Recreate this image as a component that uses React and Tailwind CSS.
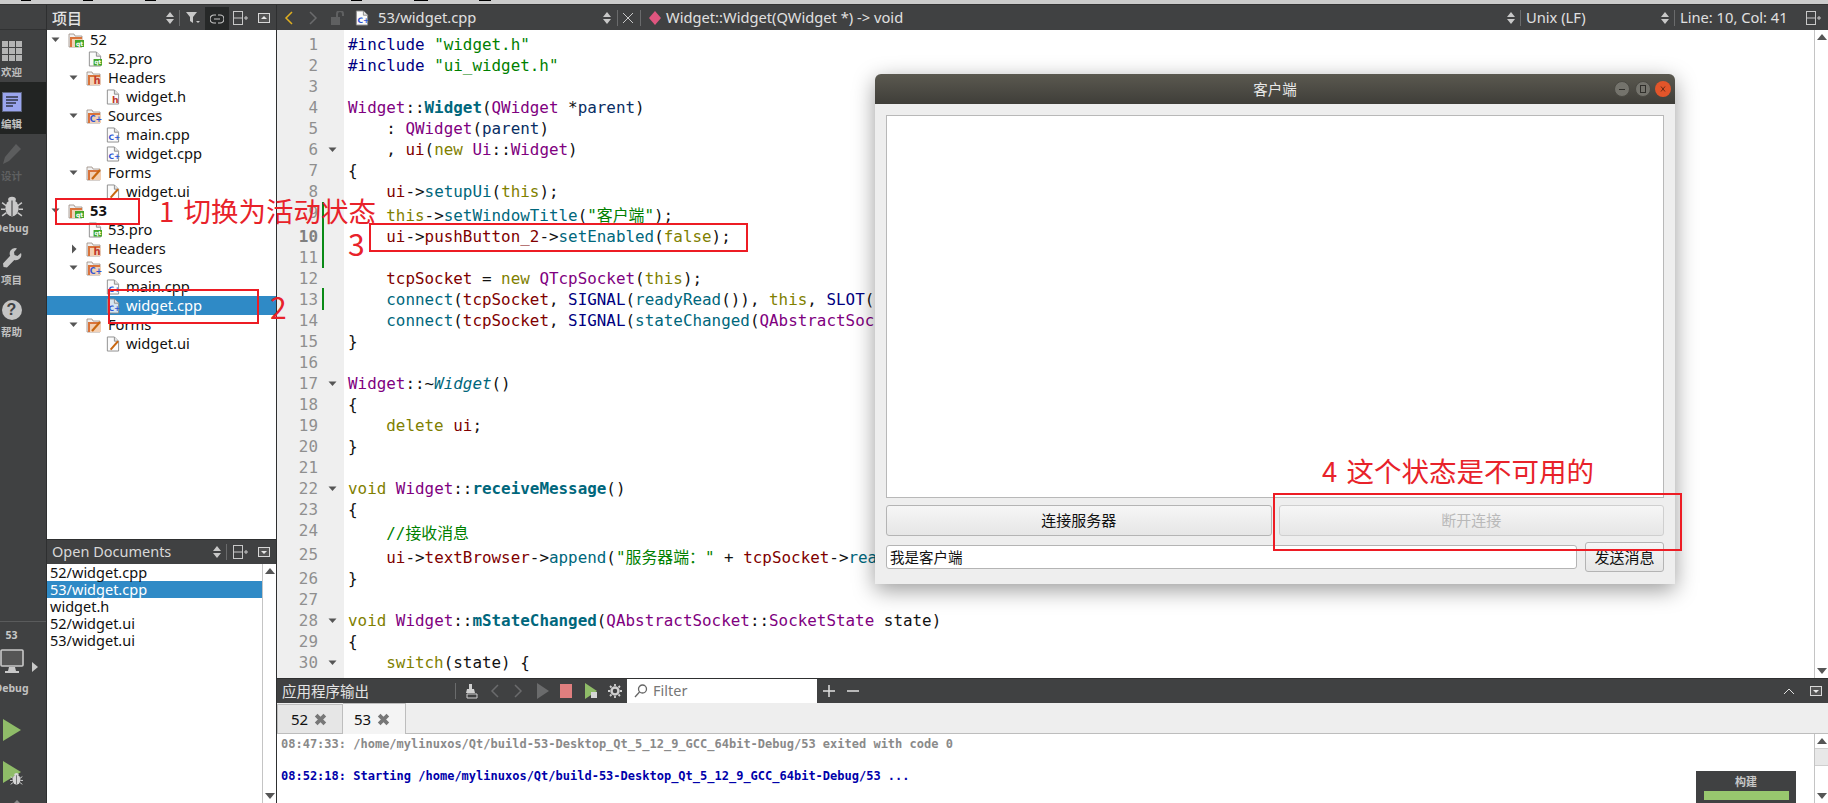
import React from 'react';

const ui = { fontFamily: '"Noto Sans", "Noto Sans CJK SC", sans-serif' };
const cjk = { fontFamily: '"Noto Sans CJK SC", sans-serif' };
const mono = { fontFamily: '"DejaVu Sans Mono", "Noto Sans CJK SC", monospace' };

/* ── small icons ─────────────────────────────────────────── */
const UpDown = ({ className = 'fill-[#c8c8c8]' }) => (
  <svg width="12" height="14" viewBox="0 0 12 14" className={className}>
    <path d="M6 1 10 6H2zM6 13 2 8h8z" />
  </svg>
);

const Sep = () => <div className="w-px h-[16px] bg-[#6a6b6c]" />;

const SplitPlus = () => (
  <svg width="16" height="16" viewBox="0 0 16 16" fill="none" stroke="#c8c8c8" strokeWidth="1">
    <rect x="0.5" y="1.5" width="9" height="13" />
    <path d="M0.5 8h9M11 8h4M13 6v4" />
  </svg>
);

const CloseBox = ({ up }) => (
  <svg width="12" height="10" viewBox="0 0 12 10">
    <rect x="0.5" y="0.5" width="11" height="9" fill="#555" stroke="#d8d8d8" />
    <path d={up ? 'M3 6h6L6 3z' : 'M3 4h6L6 7z'} fill="#e8e8e8" />
  </svg>
);

const Badge = ({ kind }) => {
  if (kind === 'qt') return (
    <g>
      <rect x="7" y="8" width="9" height="7" fill="#41a62a" />
      <text x="11.5" y="13.6" textAnchor="middle" fontSize="6" fontWeight="700" fill="#fff" fontFamily="DejaVu Sans">qt</text>
    </g>
  );
  if (kind === 'h') return <text x="11" y="14" textAnchor="middle" fontSize="10" fontWeight="700" fill="#c0392b" fontFamily="DejaVu Sans">h</text>;
  if (kind === 'cpp') return <text x="10" y="13.5" textAnchor="middle" fontSize="8" fontWeight="700" fill="#2f55d4" fontFamily="DejaVu Sans">C+</text>;
  return <path d="M6 14 14 5" stroke="#c8660f" strokeWidth="2.2" />;
};

const FolderIcon = ({ kind }) => (
  <svg width="16" height="16" viewBox="0 0 16 16" className="shrink-0">
    <path d="M1 2h5l1 2h7v11H1z" fill="#f0f0f0" stroke="#9a8b80" strokeWidth="0.8" />
    <path d="M2 5h12v10H2z" fill="#d9743c" />
    <path d="M4 7h11v8H4z" fill="#f2d0b5" />
    <Badge kind={kind} />
  </svg>
);

const FileIcon = ({ kind, selected }) => (
  <svg width="15" height="16" viewBox="0 0 16 16" className="shrink-0">
    <path d="M2.5 0.5H10L14.5 5V15.5H2.5z" fill={selected ? '#d5e4f0' : '#fbfbfb'} stroke="#8c8c8c" />
    <path d="M10 .5V5h4.5" fill="#e4e4e4" stroke="#8c8c8c" />
    <Badge kind={kind} />
  </svg>
);

const Arrow = ({ open }) => (
  <svg width="12" height="12" viewBox="0 0 12 12" className="fill-[#555]">
    {open ? <path d="M1.5 3.5h8L5.5 8z" /> : <path d="M4 1.5 8.5 6 4 10.5z" />}
  </svg>
);

/* ── left mode bar ───────────────────────────────────────── */
const GridIcon = () => (
  <div className="grid grid-cols-3 gap-[1px] w-[20px] h-[20px] mt-[2px]">
    {[0, 1, 2, 3, 4, 5, 6, 7, 8].map((i) => <div key={i} className="bg-[#b4b4b4]" />)}
  </div>
);

const EditIcon = () => (
  <svg width="20" height="20" viewBox="0 0 20 20">
    <rect x="0.5" y="0.5" width="19" height="19" fill="#9aa5ee" stroke="#5c6480" />
    <path d="M4 5h12M4 8h12M4 11h10M4 14h7" stroke="#4a5070" strokeWidth="2" />
  </svg>
);

const PencilIcon = () => (
  <svg width="20" height="22" viewBox="0 0 20 22" fill="#5c5d5e">
    <path d="M14 1l5 5L7 18l-6 3 2-7z" />
  </svg>
);

const BugIcon = ({ size = 20, fill = '#c9c9c9' }) => (
  <svg width={size} height={size} viewBox="0 0 20 20" fill={fill}>
    <ellipse cx="10" cy="12" rx="6" ry="7.5" />
    <ellipse cx="10" cy="4" rx="3.5" ry="2.5" />
    <path d="M1 7l4 3M19 7l-4 3M0 13h4M20 13h-4M1 19l4-3M19 19l-4-3" stroke={fill} strokeWidth="1.4" />
    <path d="M10 5v14" stroke="#404142" />
  </svg>
);

const WrenchIcon = () => (
  <svg width="20" height="22" viewBox="0 0 20 22" fill="#c4c4c4">
    <path d="M13 1a5.5 5.5 0 0 0-4.8 7.8L1 16.5 1.5 20l3.5.5 7.3-7.4A5.5 5.5 0 0 0 19 6l-3.5 3-3-1-.5-3 3-3.5A5 5 0 0 0 13 1z" />
  </svg>
);

const HelpIcon = () => (
  <div className="w-[20px] h-[20px] rounded-full bg-[#c4c4c4] flex items-center justify-center text-[#404142] text-[16px] font-bold leading-none" style={{ fontFamily: '"Liberation Sans", sans-serif' }}>?</div>
);

const modes = [
  { label: '欢迎', icon: <GridIcon /> },
  { label: '编辑', icon: <EditIcon />, active: true },
  { label: '设计', icon: <PencilIcon />, dim: true },
  { label: 'Debug', icon: <BugIcon size={22} /> },
  { label: '项目', icon: <WrenchIcon /> },
  { label: '帮助', icon: <HelpIcon /> },
];

const ModeBar = () => (
  <div className="w-[47px] shrink-0 bg-[#404142] border-r border-[#2e2f30] overflow-hidden flex flex-col">
    <div className="h-[25px] shrink-0 border-b border-[#303132]" />
    {modes.map((m) => (
      <div key={m.label} className={`h-[52px] shrink-0 ${m.active ? 'bg-[#222423]' : ''}`}>
        <div className="w-[47px] -ml-[12px] flex flex-col items-center pt-[8px]">
          <div className="h-[24px] flex items-center justify-center">{m.icon}</div>
          <div className={`h-[16px] mt-[2px] text-[10.5px] leading-[16px] font-bold ${m.dim ? 'text-[#5f6061]' : 'text-[#c0c0c0]'}`} style={ui}>{m.label}</div>
        </div>
      </div>
    ))}
    <div className="mt-auto h-[182px] shrink-0 border-t border-[#5a5b5c] relative">
      <div className="w-[47px] -ml-[12px] flex flex-col items-center">
        <div className="mt-[5px] h-[16px] text-[10.5px] leading-[16px] font-bold text-[#c8c8c8]" style={ui}>53</div>
        <svg width="24" height="25" viewBox="0 0 24 25" className="mt-[6px]">
          <rect x="1" y="1" width="22" height="16" rx="1" fill="#555" stroke="#c8c8c8" strokeWidth="1.6" />
          <path d="M9 18h6l1 4h3v2H5v-2h3z" fill="#c8c8c8" />
        </svg>
        <div className="h-[16px] mt-[6px] text-[10.5px] leading-[16px] font-bold text-[#c0c0c0]" style={ui}>Debug</div>
        <svg width="18" height="22" viewBox="0 0 18 22" className="mt-[23px]"><path d="M0 0 18 11 0 22z" fill="#8fbc68" /></svg>
        <div className="relative mt-[20px] w-[18px] h-[22px]">
          <svg width="18" height="22" viewBox="0 0 18 22"><path d="M0 0 18 11 0 22z" fill="#8fbc68" /></svg>
          <div className="absolute left-[7px] top-[11px]"><BugIcon size={13} fill="#d6d6d6" /></div>
        </div>
        <svg width="16" height="16" viewBox="0 0 16 16" className="mt-[15px] ml-[8px]">
          <path d="M2 16 7 8l2 2-3 6z" fill="#d2730f" />
          <path d="M5 6 9 2l6 6-3 3z" fill="#8a8a8a" />
        </svg>
      </div>
      <svg width="6" height="10" viewBox="0 0 6 10" className="absolute left-[32px] top-[40px] fill-[#c8c8c8]"><path d="M0 0 6 5 0 10z" /></svg>
    </div>
  </div>
);

/* ── project tree ────────────────────────────────────────── */
const tree = [
  { level: 0, text: '52', open: true, folder: 'qt' },
  { level: 1, text: '52.pro', file: 'qt' },
  { level: 1, text: 'Headers', open: true, folder: 'h' },
  { level: 2, text: 'widget.h', file: 'h' },
  { level: 1, text: 'Sources', open: true, folder: 'cpp' },
  { level: 2, text: 'main.cpp', file: 'cpp' },
  { level: 2, text: 'widget.cpp', file: 'cpp' },
  { level: 1, text: 'Forms', open: true, folder: 'ui' },
  { level: 2, text: 'widget.ui', file: 'ui' },
  { level: 0, text: '53', open: true, folder: 'qt', bold: true },
  { level: 1, text: '53.pro', file: 'qt' },
  { level: 1, text: 'Headers', open: false, folder: 'h' },
  { level: 1, text: 'Sources', open: true, folder: 'cpp' },
  { level: 2, text: 'main.cpp', file: 'cpp' },
  { level: 2, text: 'widget.cpp', file: 'cpp', selected: true },
  { level: 1, text: 'Forms', open: true, folder: 'ui' },
  { level: 2, text: 'widget.ui', file: 'ui' },
];
const levelPad = ['pl-[3px]', 'pl-[21px]', 'pl-[39px]'];

const TreeRow = ({ row }) => (
  <div className={`h-[19px] flex items-center ${levelPad[row.level]} ${row.selected ? 'bg-[#2f8ac6] text-white' : 'text-[#111]'}`}>
    <div className="w-[12px] mr-[6px] shrink-0 flex justify-center">
      {row.folder && <Arrow open={row.open} />}
    </div>
    <div className="w-[16px] mr-[6px] shrink-0 flex justify-center">
      {row.folder ? <FolderIcon kind={row.folder} /> : <FileIcon kind={row.file} selected={row.selected} />}
    </div>
    <span className={`text-[14.7px] leading-[19px] ${row.bold ? 'font-bold' : ''}`}>{row.text}</span>
  </div>
);

const docs = ['52/widget.cpp', '53/widget.cpp', 'widget.h', '52/widget.ui', '53/widget.ui'];

const ScrollBar = ({ thumb }) => (
  <div className="w-[14px] shrink-0 bg-white border-l border-[#c4c4c4] flex flex-col items-center justify-between py-[4px]">
    <div className="w-full flex flex-col items-center">
      <svg width="10" height="6" viewBox="0 0 10 6" className="fill-[#555]"><path d="M5 0 10 6H0z" /></svg>
      {thumb && <div className="w-full h-[18px] mt-[4px] bg-[#e8e8e8] border-y border-[#cfcfcf]" />}
    </div>
    <svg width="10" height="6" viewBox="0 0 10 6" className="fill-[#555]"><path d="M5 6 0 0h10z" /></svg>
  </div>
);

const SidePanel = () => (
  <div className="w-[230px] shrink-0 flex flex-col border-r border-[#2e2f30]" style={ui}>
    <div className="h-[25px] shrink-0 bg-[#404142] flex items-center pl-[5px]">
      <span className="text-[#e4e4e4] text-[15px] leading-none font-medium w-[112px]" style={cjk}>项目</span>
      <UpDown />
      <div className="ml-[3px]"><Sep /></div>
      <svg width="14" height="12" viewBox="0 0 14 12" className="ml-[6px] fill-[#c8c8c8]"><path d="M0 0h11L7 5v6L4 9V5z" /><path d="M10 9h4l-2 2z" /></svg>
      <div className="ml-[5px] w-[24px] h-[23px] mt-[2px] bg-[#262828] flex items-center justify-center">
        <svg width="14" height="10" viewBox="0 0 14 10" fill="none" stroke="#c8c8c8" strokeWidth="1.2"><path d="M6 1H4a4 4 0 0 0 0 8h2M8 1h2a4 4 0 0 1 0 8H8M4 5h6" /></svg>
      </div>
      <div className="ml-[4px]"><SplitPlus /></div>
      <div className="ml-[9px]"><CloseBox up /></div>
    </div>
    <div className="flex-1 bg-white">
      {tree.map((row, i) => <TreeRow key={i} row={row} />)}
    </div>
    <div className="h-[264px] shrink-0 flex flex-col">
      <div className="h-[25px] shrink-0 bg-[#404142] border-t border-[#2e2f30] flex items-center pl-[5px]">
        <span className="text-[#d8d8d8] text-[14.5px] w-[159px]">Open Documents</span>
        <UpDown />
        <div className="ml-[3px]"><Sep /></div>
        <div className="ml-[6px]"><SplitPlus /></div>
        <div className="ml-[9px]"><CloseBox /></div>
      </div>
      <div className="flex-1 flex bg-white">
        <div className="flex-1">
          {docs.map((d, i) => (
            <div key={d} className={`h-[17px] pl-[3px] text-[14.5px] leading-[17px] ${i === 1 ? 'bg-[#2f8ac6] text-white' : 'text-[#111]'}`}>{d}</div>
          ))}
        </div>
        <ScrollBar />
      </div>
    </div>
  </div>
);

/* ── editor toolbar ──────────────────────────────────────── */
const Chevron = ({ left, color = '#6a6b6c' }) => (
  <svg width="12" height="14" viewBox="0 0 12 14" fill="none" stroke={color} strokeWidth="1.5">
    <path d={left ? 'M9 1 3 7l6 6' : 'M3 1l6 6-6 6'} />
  </svg>
);

const EditorBar = () => (
  <div className="h-[25px] shrink-0 bg-[#404142] flex items-center pl-[6px] text-[#e0e0e0] text-[14.7px]" style={ui}>
    <Chevron left color="#e0b020" />
    <div className="ml-[12px]"><Chevron /></div>
    <svg width="14" height="14" viewBox="0 0 14 14" className="ml-[12px] fill-[#5f6061]"><rect x="0" y="6" width="9" height="8" /><path d="M6 6V3a3 3 0 0 1 6 0v2" fill="none" stroke="#5f6061" strokeWidth="2" /></svg>
    <div className="ml-[9px]"><FileIcon kind="cpp" /></div>
    <span className="ml-[9px] w-[223px]">53/widget.cpp</span>
    <UpDown />
    <div className="ml-[4px]"><Sep /></div>
    <svg width="12" height="12" viewBox="0 0 12 12" className="ml-[4px]" stroke="#c8c8c8" strokeWidth="1"><path d="M1 1l10 10M11 1 1 11" /></svg>
    <div className="ml-[6px]"><Sep /></div>
    <svg width="12" height="14" viewBox="0 0 12 14" className="ml-[8px] fill-[#e0567f]"><path d="M6 0 12 7 6 14 0 7z" /></svg>
    <span className="ml-[5px] w-[839px]">Widget::Widget(QWidget *) -&gt; void</span>
    <UpDown />
    <div className="ml-[3px]"><Sep /></div>
    <span className="ml-[5px] w-[133px]">Unix (LF)</span>
    <UpDown />
    <div className="ml-[3px]"><Sep /></div>
    <span className="ml-[5px] w-[126px]">Line: 10, Col: 41</span>
    <SplitPlus />
  </div>
);

/* ── code ────────────────────────────────────────────────── */
const K = ({ children }) => <span className="text-[#808000]">{children}</span>;
const T = ({ children }) => <span className="text-[#800080]">{children}</span>;
const F = ({ children }) => <span className="text-[#00677c]">{children}</span>;
const B = ({ children }) => <span className="text-[#00677c] font-bold">{children}</span>;
const S = ({ children }) => <span className="text-[#008000]">{children}</span>;
const M = ({ children }) => <span className="text-[#800000]">{children}</span>;
const N = ({ children }) => <span className="text-[#000080]">{children}</span>;
const P = ({ children }) => <span className="text-[#092e64]">{children}</span>;

const lines = [
  { c: <><N>#include</N> <S>"widget.h"</S></> },
  { c: <><N>#include</N> <S>"ui_widget.h"</S></> },
  { c: '' },
  { c: <><T>Widget</T>::<B>Widget</B>(<T>QWidget</T> *<P>parent</P>)</> },
  { c: <>{'    '}: <T>QWidget</T>(<P>parent</P>)</> },
  { c: <>{'    '}, <M>ui</M>(<K>new</K> <T>Ui</T>::<T>Widget</T>)</>, fold: true },
  { c: '{' },
  { c: <>{'    '}<M>ui</M>-&gt;<F>setupUi</F>(<K>this</K>);</> },
  { c: <>{'    '}<K>this</K>-&gt;<F>setWindowTitle</F>(<S>"客户端"</S>);</>, tall: true },
  { c: <>{'    '}<M>ui</M>-&gt;<M>pushButton_2</M>-&gt;<F>setEnabled</F>(<K>false</K>);</>, cur: true },
  { c: '' },
  { c: <>{'    '}<M>tcpSocket</M> = <K>new</K> <T>QTcpSocket</T>(<K>this</K>);</> },
  { c: <>{'    '}<F>connect</F>(<M>tcpSocket</M>, <N>SIGNAL</N>(<F>readyRead</F>()), <K>this</K>, <N>SLOT</N>(<F>receiveMessage</F>()));</> },
  { c: <>{'    '}<F>connect</F>(<M>tcpSocket</M>, <N>SIGNAL</N>(<F>stateChanged</F>(<T>QAbstractSocket</T>::<T>SocketState</T>)));</> },
  { c: '}' },
  { c: '' },
  { c: <><T>Widget</T>::~<span className="text-[#00677c] italic">Widget</span>()</>, fold: true },
  { c: '{' },
  { c: <>{'    '}<K>delete</K> <M>ui</M>;</> },
  { c: '}' },
  { c: '' },
  { c: <><K>void</K> <T>Widget</T>::<B>receiveMessage</B>()</>, fold: true },
  { c: '{' },
  { c: <>{'    '}<S>//接收消息</S></>, tall: true },
  { c: <>{'    '}<M>ui</M>-&gt;<M>textBrowser</M>-&gt;<F>append</F>(<S>"服务器端："</S> + <M>tcpSocket</M>-&gt;<F>readAll</F>());</>, tall: true },
  { c: '}' },
  { c: '' },
  { c: <><K>void</K> <T>Widget</T>::<B>mStateChanged</B>(<T>QAbstractSocket</T>::<T>SocketState</T> state)</>, fold: true },
  { c: '{' },
  { c: <>{'    '}<K>switch</K>(state) {'{'}</>, fold: true },
];

const Editor = () => (
  <div className="flex-1 min-h-0 flex overflow-hidden bg-white">
    <div className="w-[67px] shrink-0 bg-[#efefef] pt-[4px] relative text-[#8f8f8f]" style={mono}>
      {lines.map((l, i) => (
        <div key={i} className={`flex ${l.tall ? 'h-[24px]' : 'h-[21px]'}`}>
          <div className={`w-[41px] text-right text-[15.9px] leading-[21px] ${l.cur ? 'font-bold text-[#808080]' : ''}`}>{i + 1}</div>
          <div className="w-[26px] h-[21px] flex items-center justify-end pr-[5px]">
            {l.fold && <Arrow open />}
          </div>
        </div>
      ))}
      <div className="absolute left-[45px] top-[172px] w-[2px] h-[66px] bg-[#0a8a16]" />
      <div className="absolute left-[45px] top-[258px] w-[2px] h-[22px] bg-[#0a8a16]" />
    </div>
    <div className="flex-1 pt-[4px] pl-[4px] text-[#111] whitespace-pre" style={mono}>
      {lines.map((l, i) => (
        <div key={i} className={`text-[15.9px] ${l.tall ? 'h-[24px] leading-[27px]' : 'h-[21px] leading-[21px]'}`}>{l.c}</div>
      ))}
    </div>
    <ScrollBar />
  </div>
);

/* ── output pane ─────────────────────────────────────────── */
const OutTab = ({ label, active }) => (
  <div className={`flex items-center gap-[6px] border-r border-[#bdbdbd] text-[15px] text-[#111] ${active ? 'w-[63px] pl-[11px] bg-[#f4f4f4] border-t -mb-px h-[31px]' : 'w-[66px] h-[29px] pl-[13px] bg-[#e6e6e6] border-l border-t'}`} style={ui}>
    <span>{label}</span>
    <svg width="13" height="13" viewBox="0 0 12 12" stroke="#777" strokeWidth="3.5"><path d="M2 2l8 8M10 2l-8 8" /></svg>
  </div>
);

const OutputPane = () => (
  <div className="h-[125px] shrink-0 flex flex-col relative">
    <div className="h-[25px] shrink-0 bg-[#404142] border-t border-[#2e2f30] flex items-center pl-[5px] text-[#e4e4e4]">
      <span className="w-[173px] text-[14.5px]" style={cjk}>应用程序输出</span>
      <Sep />
      <svg width="14" height="16" viewBox="0 0 14 16" className="ml-[9px]"><path d="M4 1h3v5H4zM2 6h7l1 4H1z" fill="#d0d0d0" /><path d="M2 11h10v4H2z" fill="none" stroke="#d0d0d0" /></svg>
      <div className="ml-[10px]"><Chevron left /></div>
      <div className="ml-[11px]"><Chevron /></div>
      <svg width="12" height="16" viewBox="0 0 12 16" className="ml-[13px] fill-[#6a6b6c]"><path d="M0 0 12 8 0 16z" /></svg>
      <div className="ml-[11px] w-[12px] h-[14px] bg-[#e07f7f]" />
      <svg width="14" height="16" viewBox="0 0 14 16" className="ml-[13px]"><path d="M0 0 12 8 0 16z" fill="#8fbc68" /><path d="M6 9h6v6H6z" fill="#d6d6d6" /></svg>
      <svg width="14" height="14" viewBox="0 0 14 14" className="ml-[9px]" fill="none" stroke="#d0d0d0" strokeWidth="2.5"><circle cx="7" cy="7" r="3.5" /><path d="M7 0v2M7 12v2M0 7h2M12 7h2M2 2l1.5 1.5M10.5 10.5 12 12M12 2l-1.5 1.5M3.5 10.5 2 12" strokeWidth="1.8" /></svg>
      <div className="ml-[5px] w-[190px] h-[24px] bg-white flex items-center pl-[7px] text-[#777] text-[14.5px]" style={ui}>
        <svg width="14" height="14" viewBox="0 0 14 14" fill="none" stroke="#666" strokeWidth="1.3"><circle cx="8.5" cy="5" r="4" /><path d="M5.5 8 1 13" /></svg>
        <span className="ml-[5px]">Filter</span>
      </div>
      <svg width="12" height="12" viewBox="0 0 12 12" className="ml-[6px]" stroke="#e0e0e0" strokeWidth="1.5"><path d="M0 6h12M6 0v12" /></svg>
      <svg width="12" height="12" viewBox="0 0 12 12" className="ml-[12px]" stroke="#e0e0e0" strokeWidth="1.5"><path d="M0 6h12" /></svg>
      <svg width="12" height="8" viewBox="0 0 12 8" fill="none" stroke="#e0e0e0" className="ml-auto mr-[15px]"><path d="M1 7l5-5 5 5" /></svg>
      <div className="mr-[6px]"><CloseBox /></div>
    </div>
    <div className="h-[31px] shrink-0 bg-[#eeeeee] border-b border-[#bdbdbd] flex items-end">
      <OutTab label="52" />
      <OutTab label="53" active />
    </div>
    <div className="flex-1 min-h-0 flex bg-white">
      <div className="flex-1 pl-[4px] pt-[1px] text-[12px] leading-[16px] font-bold whitespace-pre" style={mono}>
        <div className="h-[16px] mt-[1px] text-[#8a8a8a]">08:47:33: /home/mylinuxos/Qt/build-53-Desktop_Qt_5_12_9_GCC_64bit-Debug/53 exited with code 0</div>
        <div className="h-[16px]" />
        <div className="h-[16px] text-[#0000aa]">08:52:18: Starting /home/mylinuxos/Qt/build-53-Desktop_Qt_5_12_9_GCC_64bit-Debug/53 ...</div>
      </div>
      <ScrollBar thumb />
    </div>
    <div className="absolute right-[32px] bottom-0 w-[100px] h-[32px] bg-[#404142] flex flex-col items-center">
      <div className="text-[11px] leading-[20px] font-bold text-[#c8c8c8]" style={cjk}>构建</div>
      <div className="w-[85px] h-[9px] bg-[#98c76e]" />
    </div>
  </div>
);

/* ── floating client window ──────────────────────────────── */
const WinBtn = ({ close, children }) => (
  <div className={`w-[16px] h-[16px] rounded-full flex items-center justify-center ${close ? 'bg-[#e2552a]' : 'bg-[#74736c] border border-[#4a4943]'}`}>{children}</div>
);

const qtBtn = 'flex items-center justify-center rounded-[3px] border border-[#b4b4b4] bg-gradient-to-b from-[#f6f6f6] to-[#e6e6e6] text-[15px]';

const ClientWindow = () => (
  <div className="absolute left-[875px] top-[74px] w-[800px] h-[510px] flex flex-col rounded-t-[6px] bg-[#eeeeee] shadow-[0_6px_22px_rgba(0,0,0,0.4)]" style={cjk}>
    <div className="h-[30px] shrink-0 rounded-t-[6px] bg-gradient-to-b from-[#5b5950] to-[#3f3e39] flex items-center justify-center relative">
      <span className="text-[14.5px] text-[#e8e8e8]">客户端</span>
      <div className="absolute right-[4px] top-[7px] flex gap-[4.5px]">
        <WinBtn><svg width="8" height="8" viewBox="0 0 8 8" stroke="#2f2e2a"><path d="M1 4.5h6" /></svg></WinBtn>
        <WinBtn><svg width="8" height="8" viewBox="0 0 8 8" fill="none" stroke="#2f2e2a"><rect x="1.5" y="0.5" width="5" height="7" /></svg></WinBtn>
        <WinBtn close><svg width="8" height="8" viewBox="0 0 8 8" stroke="#6a2a14"><path d="M2 1.5 6 6.500M6 1.500 2 6.500" /></svg></WinBtn>
      </div>
    </div>
    <div className="flex-1 min-h-0 flex flex-col px-[11px] pt-[11px] pb-[12px]">
      <div className="flex-1 bg-white border border-[#b8b8b8]" />
      <div className="h-[31px] mt-[7px] shrink-0 flex gap-[7px]">
        <div className={`flex-1 ${qtBtn} text-[#111]`}>连接服务器</div>
        <div className={`flex-1 ${qtBtn} text-[#b9b9b9] border-[#cfcfcf]`}>断开连接</div>
      </div>
      <div className="h-[30px] mt-[6px] shrink-0 flex items-center gap-[8px]">
        <div className="flex-1 h-[24px] bg-white border border-[#b4b4b4] rounded-[3px] pl-[3px] text-[14.5px] leading-[22px] text-[#111]">我是客户端</div>
        <div className={`w-[79px] h-[30px] ${qtBtn} text-[#111]`}>发送消息</div>
      </div>
    </div>
  </div>
);

/* ── red annotations pasted over the shot ────────────────── */
const Notes = () => (
  <div className="text-[#e8222a]" style={cjk}>
    <div className="absolute left-[55px] top-[198px] w-[85px] h-[27px] border-2 border-[#ed1c24]" />
    <div className="absolute left-[108px] top-[289px] w-[151px] h-[35px] border-2 border-[#ed1c24]" />
    <div className="absolute left-[369px] top-[223px] w-[379px] h-[29px] border-2 border-[#ed1c24]" />
    <div className="absolute left-[1273px] top-[493px] w-[409px] h-[58px] border-2 border-[#ed1c24]" />
    <div className="absolute left-[159px] top-[190px] text-[27.5px] leading-[40px] whitespace-nowrap [word-spacing:3px]">1 切换为活动状态</div>
    <div className="absolute left-[270px] top-[286px] text-[30px] leading-[40px]">2</div>
    <div className="absolute left-[348px] top-[223px] text-[30px] leading-[40px]">3</div>
    <div className="absolute left-[1322px] top-[450px] text-[27.5px] leading-[40px] whitespace-nowrap [word-spacing:3px]">4 这个状态是不可用的</div>
  </div>
);

const stripMarks = ['ml-[21px] w-[10px]', 'ml-[52px] w-[10px]', 'ml-[52px] w-[11px]', 'ml-[195px] w-[11px]', 'ml-[52px] w-[14px]', 'ml-[51px] w-[12px]'];

export default function App() {
  return (
    <div className="w-[1828px] h-[803px] relative overflow-hidden flex flex-col bg-[#404142]">
      <div className="h-[5px] shrink-0 bg-[#cbcbcb] border-b border-[#333] flex items-start">
        {stripMarks.map((m) => <div key={m} className={`${m} h-px bg-black`} />)}
      </div>
      <div className="flex-1 min-h-0 flex">
        <ModeBar />
        <SidePanel />
        <div className="flex-1 min-w-0 flex flex-col">
          <EditorBar />
          <Editor />
          <OutputPane />
        </div>
      </div>
      <ClientWindow />
      <Notes />
    </div>
  );
}
